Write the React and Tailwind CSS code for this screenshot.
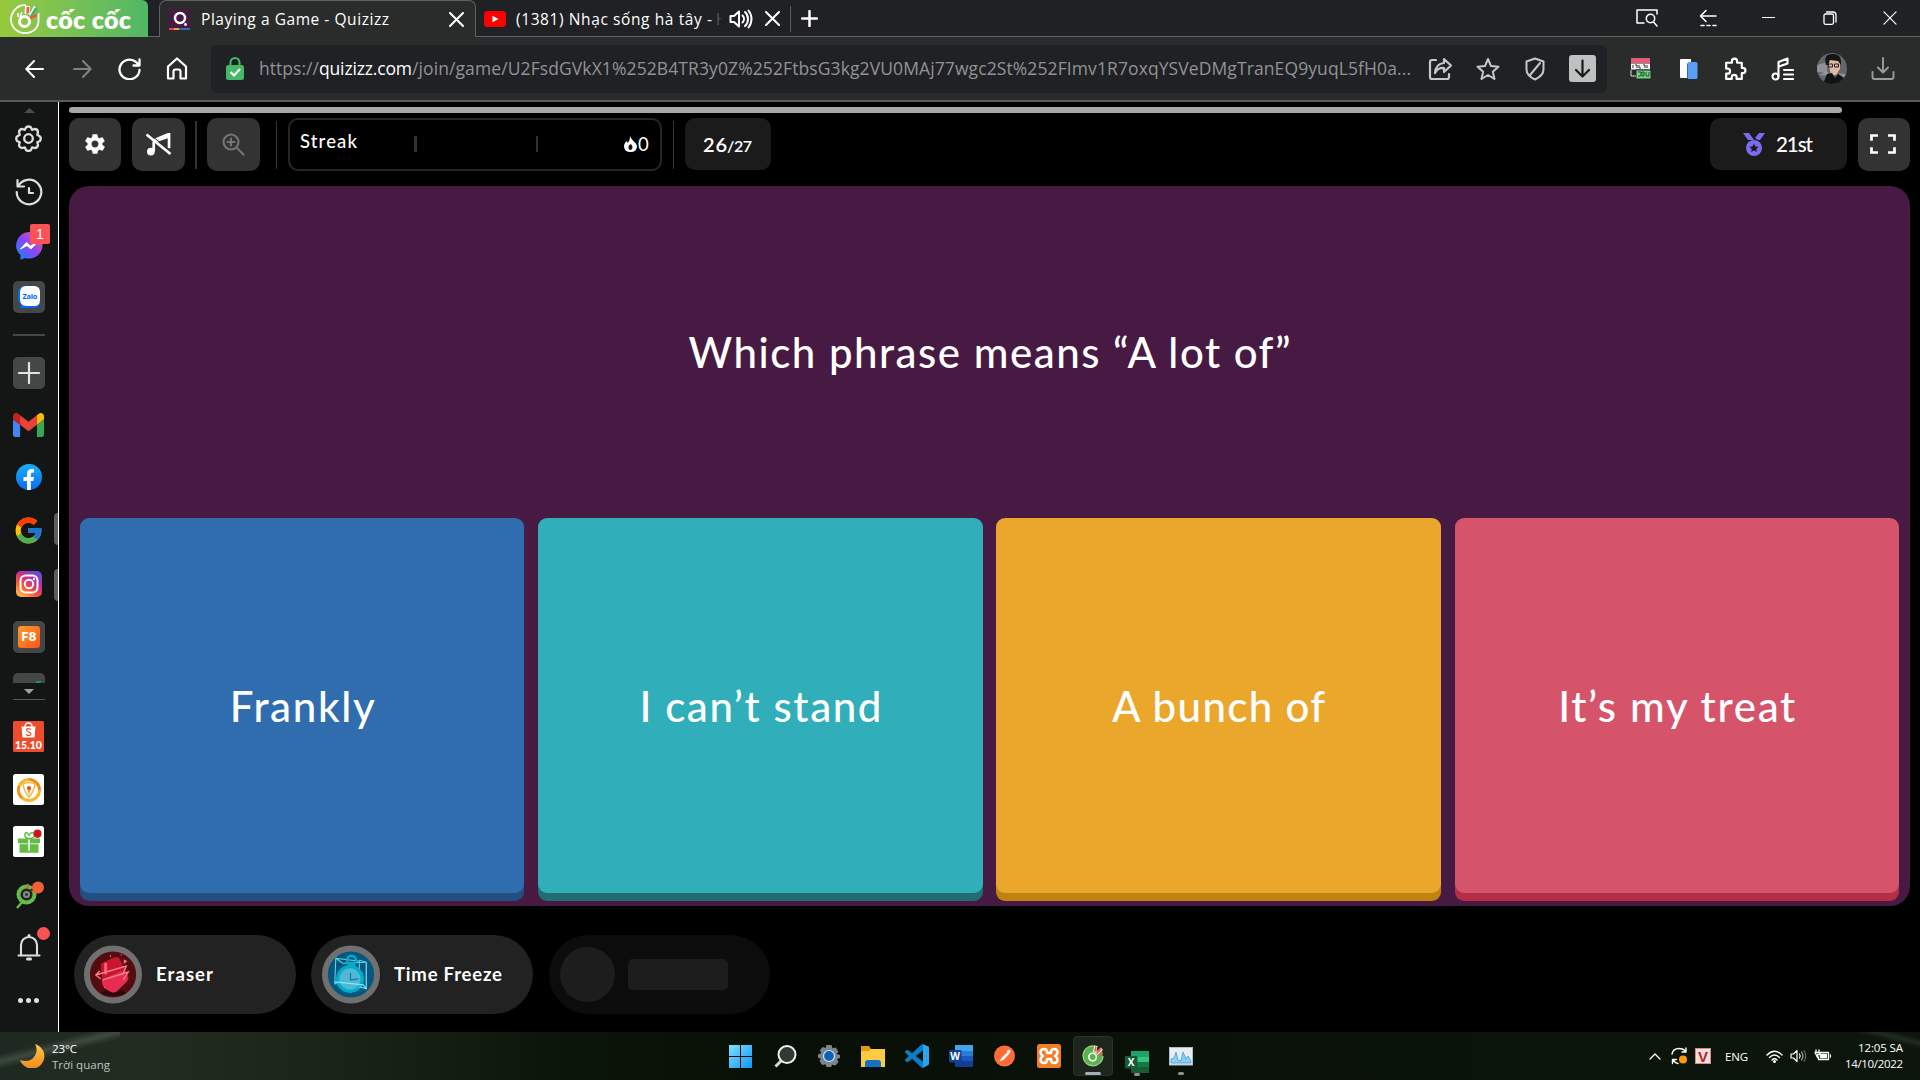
import React, { useLayoutEffect, useRef } from "react";
import { FcGoogle } from "react-icons/fc";
import { IoMdSettings } from "react-icons/io";

const UI = "font-['Open_Sans','Noto_Sans',sans-serif]";
const ROUND = "font-['Lato','Open_Sans',sans-serif]";

/* Text set to an exact width by adjusting its tracking. */
function Fit({ w, className = "", children }) {
  const ref = useRef(null);
  useLayoutEffect(() => {
    const el = ref.current;
    el.style.letterSpacing = "0px";
    const natural = el.getBoundingClientRect().width;
    const n = Math.max(1, el.textContent.length - 1);
    el.style.letterSpacing = (w - natural) / n + "px";
  }, [w]);
  return (
    <span className={"block shrink-0 " + className} style={{ width: w }}>
      <span ref={ref} className="inline-block whitespace-nowrap">{children}</span>
    </span>
  );
}

function Line({ w = 24, h = w, vb = "0 0 24 24", sw = 2, className = "", children }) {
  return (
    <svg width={w} height={h} viewBox={vb} fill="none" stroke="currentColor" strokeWidth={sw}
      strokeLinecap="round" strokeLinejoin="round" className={"block shrink-0 " + className}>
      {children}
    </svg>
  );
}

const Cross = ({ s = 15, sw = 2, className = "" }) => (
  <Line w={s} vb="0 0 15 15" sw={sw} className={className}><path d="M1 1l13 13M14 1L1 14" /></Line>
);

function CocMark({ s, leaf, ring }) {
  return (
    <svg width={s} height={s} viewBox="0 0 30 30" fill="none" className="block shrink-0">
      <path d="M16 2A13 13 0 1 0 28 15L27 5 20 9Z" fill={leaf} />
      <path d="M17 1.500A13.500 13.500 0 1 0 28.500 15" stroke={ring} strokeWidth="1.800" />
      <path d="M19 1l-2 9" stroke="#fff" strokeWidth="4.500" /><path d="M27 5l-7 7" stroke="#fff" strokeWidth="4.500" />
      <path d="M19 2l-1.500 7M26 5l-6 6.500M28.500 11l-6 2.500" stroke="#f05a3c" strokeWidth="2.400" />
      <circle cx="14.500" cy="16.500" r="5.200" stroke="#fff" strokeWidth="2.200" />
    </svg>
  );
}

function TabStrip() {
  return (
    <div className="flex h-[37px] bg-[#202124] text-white">
      <div className="flex h-[37px] w-[148px] shrink-0 items-center rounded-tr-[6px] bg-linear-to-r from-[#98c93c] to-[#4fb765] pl-[10px]">
        <svg width="30" height="30" viewBox="0 0 30 30" fill="none" className="block">
          <path d="M16 1.200C7 .500 1 8 1 15.500S7 29 15 29s13.500-5 13.500-12V9" stroke="#fff" strokeWidth="1.800" />
          <path d="M23 3l4-1.500 1.500 8-8 4-3-2z" fill="#6cbf5c" />
          <path d="M17.500 2l-.500 8" stroke="#fff" strokeWidth="5" /><path d="M18 3l-.500 6.500M27 11l-7 3" stroke="#f05a3c" strokeWidth="2.600" />
          <path d="M25 2.500l-5 9" stroke="#fff" strokeWidth="2.500" /><path d="M26 4l-5 8" stroke="#3fae5e" strokeWidth="2" />
          <path d="M12 8l-2 5M8 9v4" stroke="#fff" strokeWidth="1.600" />
          <circle cx="14.500" cy="17.500" r="5" stroke="#fff" strokeWidth="3" />
        </svg>
        <Fit w={85} className="ml-[6px] font-['Lato','Open_Sans',sans-serif] text-[25px] leading-[30px] font-extrabold">cốc cốc</Fit>
      </div>
      <div className="h-[37px] w-[11px] border-b border-[#5f6163]" />
      <div className="flex h-[37px] w-[317px] shrink-0 items-center rounded-t-[7px] border border-b-0 border-[#5f6163] bg-[#2a2c2b] pl-[9px]">
        <svg width="21" height="21" viewBox="0 0 21 21" fill="none" className="block">
          <rect width="21" height="19" fill="#461a42" /><path d="M0 20h5" stroke="#e0405f" strokeWidth="2" /><path d="M5 20h5" stroke="#f0a030" strokeWidth="2" /><path d="M10 20h11" stroke="#2f6dae" strokeWidth="2" />
          <circle cx="11" cy="9" r="5" stroke="#fff" strokeWidth="2.500" /><circle cx="16.500" cy="15.500" r="1.400" fill="#fff" />
        </svg>
        <Fit w={188} className={UI + " ml-[11px] text-[15.500px] leading-[20px]"}>Playing a Game - Quizizz</Fit>
        <Cross className="ml-[60px]" />
      </div>
      <div className="flex h-[37px] flex-1 items-center border-b border-[#5f6163] pt-px pl-[8px]">
        <svg width="22" height="16" viewBox="0 0 22 16" className="block"><rect width="22" height="16" rx="3.500" fill="#f00" /><path d="M8.500 4.700l6 3.300-6 3.300z" fill="#fff" /></svg>
        <div className="ml-[10px] flex w-[212px]">
          <Fit w={196} className={UI + " text-[15.500px] leading-[24px]"}>(1381) Nhạc sống hà tây -</Fit>
          <span className={UI + " ml-[4px] bg-linear-to-r from-[#77797c] to-[#202124] to-60% bg-clip-text text-[15.500px] leading-[24px] text-transparent"}>H</span>
        </div>
        <Line w={24} h={20} vb="0 0 24 20" className="ml-px"><path d="M1.500 7v6h3.500l5 4.500v-15L5 7zM13.500 6.500c2 2 2 5 0 7M16 3c4 3.500 4 10.500 0 14M19.500 1.500c4 5 4 12 0 17" /></Line>
        <Cross className="ml-[12px]" />
        <div className="ml-[10px] h-[26px] w-px bg-[#5a5c5e]" />
        <Line w={17} vb="0 0 17 17" sw={2.5} className="ml-[10px]"><path d="M8.500 1v15M1 8.500h15" /></Line>
        <div className="mr-[23px] ml-auto flex items-center pb-[2px]">
          <Line w={22} h={18} vb="0 0 22 18" sw={1.5}><path d="M8 14H1V1h20v4" /><circle cx="14.500" cy="9.500" r="4.200" /><path d="M17.500 13l3.500 4" /></Line>
          <Line w={18} h={18} vb="0 0 18 18" sw={1.6} className="ml-[41px]"><path d="M17 7H1.500M7 1.500L1.500 7 7 12.500" /><path d="M2 16.500h3M8 16.500h3M14 16.500h3" /></Line>
          <div className="ml-[45px] h-[1.500px] w-[13px] bg-white" />
          <Line w={14} h={14} vb="0 0 14 14" sw={1.3} className="ml-[48px]"><rect x="1" y="3" width="9.500" height="10.300" rx="1.500" /><path d="M3.500 1h6.500q3 0 3 3v7" /></Line>
          <Cross s={14} sw={1.3} className="ml-[46px]" />
        </div>
      </div>
    </div>
  );
}

function Toolbar() {
  return (
    <div className="flex h-[65px] items-center border-b-2 border-[#5a5c5b] bg-[#2a2c2b] text-white">
      <Line w={19} h={18} vb="0 0 19 18" className="ml-[25px]"><path d="M18 9H1.500M9 1L1.300 9 9 17" /></Line>
      <Line w={19} h={18} vb="0 0 19 18" className="ml-[29px] text-[#808281]"><path d="M1 9h16.500M10 1l7.700 8L10 17" /></Line>
      <Line w={23} h={22} vb="0 0 23 22" sw={2.3} className="ml-[26px]"><path d="M21.500 12A10 9.800 0 1 1 18 4l3 3M21.500 1.500V7.500H15.500" /></Line>
      <Line w={22} h={23} vb="0 0 22 23" sw={2.2} className="ml-[25px]"><path d="M2 9.500L11 1.500l9 8V21.500H14.500V14.500q0-2-2-2h-3q-2 0-2 2v7H2z" /></Line>
      <div className="ml-[23px] flex h-[48px] w-[1396px] shrink-0 items-center rounded-[6px] bg-[#202124] pl-[15px]">
        <svg width="18" height="23" viewBox="0 0 18 23" fill="none" className="block"><path d="M4.500 9V5.500a4.500 4.500 0 0 1 9 0V9" stroke="#46b968" strokeWidth="2" /><rect y="8" width="18" height="15" rx="2.500" fill="#46b968" /><path d="M4.500 15l3.500 3.500 6-6.500" stroke="#fff" strokeWidth="2.200" /></svg>
        <div className={UI + " -mt-px ml-[15px] flex text-[17.500px] leading-[26px] text-[#919395]"}>
          <Fit w={60}>https://</Fit>
          <Fit w={93} className="text-white">quizizz.com</Fit>
          <Fit w={999}>/join/game/U2FsdGVkX1%252B4TR3y0Z%252FtbsG3kg2VU0MAj77wgc2St%252FImv1R7oxqYSVeDMgTranEQ9yuqL5fH0a...</Fit>
        </div>
        <div className="ml-[17px] flex items-center text-[#c6c7c8]">
          <Line w={25} h={24} vb="0 0 25 24" sw={2.2}><path d="M8 3H4Q2 3 2 5v15q0 2 2 2h15q2 0 2-2v-3" /><path d="M16 2l7 6.500-7 6.500v-4c-4-.300-7 1.200-9 5 .500-6 4-9.500 9-10z" /></Line>
          <Line w={24} h={24} className="ml-[23px]"><path d="M12 2l3 7 7.500.700-5.700 5 1.700 7.300L12 18l-6.500 4 1.700-7.300-5.700-5L9 9z" /></Line>
          <Line w={20} h={24} vb="0 0 20 24" className="ml-[25px]"><path d="M10 1.500l8.500 3v8q0 6-8.500 10-8.500-4-8.500-10v-8zM15 6L5.500 17.500" /></Line>
          <div className="ml-[24px] flex h-[27px] w-[27px] items-center justify-center rounded-[3px] bg-[#bfc0c0] text-[#17181a]"><Line w={17} h={19} vb="0 0 17 19" sw={2.2}><path d="M8.500 1.500v16M2 11l6.500 6.500L15 11" /></Line></div>
        </div>
      </div>
      <svg width="22" height="22" viewBox="0 0 22 22" className="ml-[23px] block shrink-0"><rect x="1" width="19" height="5" fill="#e85a78" /><path d="M1 5.500h19v6H1z" fill="#f4f4f4" /><path d="M3 7v3M5 7h2v3M9 7v3h2M13 7h2v3M17 7v3" stroke="#333" fill="none" /><rect x="6" y="12" width="15" height="9" fill="#7dd18b" stroke="#222" /><path d="M8 14h3v4H8M12 14h2v4h-2zM16 14v4h3v-4" stroke="#155c28" fill="none" /><path d="M1 12v6h5" stroke="#ddd" fill="none" /></svg>
      <svg width="18" height="22" viewBox="0 0 18 22" className="ml-[28px] block shrink-0"><path d="M0 2Q0 1 1 1h10v4H9Q7 5 7 7v13H1q-1 0-1-1z" fill="#fff" /><rect x="7.500" y="4" width="10" height="17" rx="1.500" fill="#5b9ff5" /></svg>
      <Line w={25} h={26} vb="0 0 24 24" sw={2.1} className="ml-[24px]"><path d="M9.500 5.500a2.500 2.500 0 0 1 5 0V7H19v5h1a2.500 2.500 0 0 1 0 5h-1v5.500h-5v-1.500a2.300 2.300 0 0 0-4.600 0v1.500H4v-5h1.300a2.400 2.400 0 0 0 0-4.900H4V7h5.500z" transform="translate(0 -1)" /></Line>
      <Line w={23} h={24} vb="0 0 23 24" sw={2.1} className="ml-[24px]"><circle cx="4.500" cy="19.500" r="3" /><path d="M7.500 19V5l9-3.500v5L8 9.500M13 13h9M13 17.500h9M13 22h9" /></Line>
      <svg width="30" height="31" viewBox="0 0 30 31" className="ml-[23px] block shrink-0"><defs><clipPath id="av"><ellipse cx="15" cy="15.500" rx="15" ry="15.500" /></clipPath></defs><g clipPath="url(#av)"><path d="M0 0h30v31H0z" fill="#62676c" /><path d="M0 12l10-3v11L0 19z" fill="#8c9196" /><path d="M11 9Q10 4 16 4t7 6v6l-4 6h-5z" fill="#e0b9a4" /><path d="M9 12Q6 1 15 1q10-1 9 11l-3-4-8-1-2 5z" fill="#151515" /><path d="M11.500 11h4v3h-4zM17.500 11h4v3h-4z" fill="none" stroke="#222" /><path d="M2 22l8-4 4 5M20 20l9 1v5" fill="#a9adb1" opacity=".6" /><path d="M6 31l4-10 5-1 3 5 3-4 6 4 1 6z" fill="#121315" /></g></svg>
      <Line w={24} h={24} vb="0 0 24 24" sw={1.900} className="ml-[24px] text-[#9b9d9c]"><path d="M12 1v14M7 10.500l5 5 5-5M1.500 15v5q0 2 2 2h17q2 0 2-2v-5" /></Line>
    </div>
  );
}

const Grey = ({ className = "", children }) => (
  <div className={"flex h-[32px] w-[32px] shrink-0 items-center justify-center rounded-[5px] bg-[#444746] " + className}>{children}</div>
);

function Edge({ className = "", children }) {
  return (
    <div className={"relative flex w-[58px] shrink-0 justify-center pr-px " + className}>
      {children}
      <div className="absolute -top-[2px] right-0 h-[32px] w-[4px] rounded-l-[4px] bg-[#5b5d5c]" />
    </div>
  );
}

function Sidebar() {
  return (
    <div className="flex w-[59px] shrink-0 flex-col items-center border-r border-white bg-[#131615] text-[#dedede]">
      <svg width="11" height="5" viewBox="0 0 11 5" className="mt-[6px] block shrink-0"><path d="M0 5L5.500 0 11 5z" fill="#4b4e4d" /></svg>
      <Line w={27} vb="0 0 27 27" sw={2.3} className="mt-[12px] mr-px">
        <path d="M11 2.500Q13.500.500 16 2.500L17 4.800 19.500 4Q22.700 4 23 7L22.300 9.800 25 11.500Q26.500 13.500 25 16L22.300 17.300 23 20Q22.500 23 19.500 23L17 22.300 16 25Q13.500 26.800 11 25L9.800 22.300 7.500 23Q4.300 23 4 20L4.800 17.300 2 16Q.500 13.500 2 11.500L4.800 9.800 4 7Q4.500 4 7.500 4L9.800 4.800z" /><circle cx="13.500" cy="13.500" r="4.300" />
      </Line>
      <Line w={28} h={28} vb="0 0 28 28" sw={2.2} className="mt-[26px]"><path d="M3 8.500A12.300 12.300 0 1 1 1.700 14M2.500 2v6.500H9" /><path d="M14 10v5h4" /></Line>
      <div className="relative mt-[26px] shrink-0">
        <svg width="28" height="28" viewBox="0 0 28 28" className="block"><defs><linearGradient id="ms" x1="0" y1="1" x2="1" y2="0"><stop stopColor="#0a8cff" /><stop offset=".5" stopColor="#8a45f8" /><stop offset="1" stopColor="#ff6070" /></linearGradient></defs><path d="M14 0a13.500 13.300 0 1 1-4 26l-4.500 2v-5A13.500 13.300 0 0 1 14 0z" fill="url(#ms)" /><path d="M5.500 17l6-6.500 4 3.500 6.500-3.500-6 6.500-4-3.500z" fill="#fff" stroke="#fff" /></svg>
        <div className="absolute -top-[8px] left-[15px] h-[20px] w-[20px] rounded-[2px] bg-[#fb5257] text-center font-['Liberation_Sans',sans-serif] text-[14px] leading-[20px] text-white">1</div>
      </div>
      <Grey className="mt-[21px]"><svg width="22" height="22" viewBox="0 0 22 22" className="block"><path d="M7 0h9q6 0 6 6v10q0 6-6 6H2l1-3q-3-3-3-7V7q0-7 7-7z" fill="#0068ff" /><path d="M8 0h8q6 0 6 6v8q0 6-6 6H8q-6 0-6-7V7q0-7 6-7z" fill="#fff" /><text x="12" y="13" fontSize="7.500" fontWeight="bold" fill="#0068ff" textAnchor="middle" fontFamily="Open Sans" textLength="15">Zalo</text></svg></Grey>
      <div className="mt-[21px] h-[2px] w-[32px] shrink-0 bg-[#444746]" />
      <Grey className="mt-[21px]"><Line w={22} vb="0 0 22 22" sw={2.2} className="text-[#e2e2e2]"><path d="M11 1v20M1 11h20" /></Line></Grey>
      <svg width="31" height="24" viewBox="52 42 88 66" preserveAspectRatio="none" className="mt-[24px] mr-px block shrink-0"><path fill="#4285f4" d="M58 108h14V74L52 59v43c0 3.320 2.690 6 6 6" /><path fill="#34a853" d="M120 108h14c3.320 0 6-2.690 6-6V59l-20 15" /><path fill="#fbbc04" d="M120 48v26l20-15v-8c0-7.420-8.470-11.650-14.400-7.200" /><path fill="#ea4335" d="M72 74V48l24 18 24-18v26L96 92" /><path fill="#c5221f" d="M52 51v8l20 15V48l-5.600-4.200c-5.940-4.450-14.400-.220-14.400 7.200" /></svg>
      <svg width="26" height="27" viewBox="0 0 26 27" className="mt-[27px] mr-px block shrink-0"><defs><linearGradient id="fb" x1="0" y1="0" x2="0" y2="1"><stop stopColor="#19affc" /><stop offset="1" stopColor="#0a6cf0" /></linearGradient></defs><circle cx="13" cy="13" r="13" fill="url(#fb)" /><path d="M11 26v-9H7.500v-4H11v-3c0-4 2.500-5.500 7-4.800v3.300c-2.500-.300-3.200.500-3.200 2V13H18l-.700 4h-2.500v9z" fill="#fff" /></svg>
      <Edge className="mt-[24px]"><FcGoogle size={31} className="block" /></Edge>
      <Edge className="mt-[25px]"><svg width="26" height="26" viewBox="0 0 26 26" fill="none" className="block"><defs><linearGradient id="ig" x1=".1" y1="1" x2=".8" y2="0"><stop stopColor="#ffc850" /><stop offset=".35" stopColor="#fa5a32" /><stop offset=".65" stopColor="#c82e92" /><stop offset="1" stopColor="#5a50d8" /></linearGradient></defs><rect width="26" height="26" rx="5" fill="url(#ig)" /><rect x="4.500" y="4.500" width="17" height="17" rx="5" stroke="#fff" strokeWidth="2" /><circle cx="13" cy="13" r="4.200" stroke="#fff" strokeWidth="2" /><circle cx="18" cy="8" r="1.200" fill="#fff" /></svg></Edge>
      <Grey className="mt-[24px]"><div className="flex h-[22px] w-[22px] items-center justify-center rounded-[3px] bg-linear-to-br from-[#ff9a26] to-[#f9501c] font-['Inter',sans-serif] text-[12px] leading-none font-extrabold text-white">F8</div></Grey>
      <div className="mt-[20px] flex h-[10px] w-[32px] shrink-0 items-end justify-end rounded-t-[5px] bg-[#444746] pr-[4px]"><div className="h-[2px] w-[5px] bg-[#149a62]" /></div>
      <svg width="10" height="5" viewBox="0 0 10 5" className="mt-[6px] block shrink-0"><path d="M0 0h10L5 5z" fill="#a0a2a1" /></svg>
      <div className="mt-[5px] h-px w-[32px] shrink-0 bg-[#555857]" />
      <svg width="31" height="31" viewBox="0 0 31 31" className="mt-[21px] mr-px block shrink-0 overflow-visible"><rect width="31" height="31" rx="1.500" fill="#ee4d2d" /><path d="M8.500 5.500h14l-1 11h-12z" fill="#fff" /><path d="M12 6q0-4 3.500-4T19 6" stroke="#fff" fill="none" strokeWidth="1.400" /><path d="M18 8.500q-4.500-2-4.500.500c0 2.500 4.500 1.500 4.500 4 0 2-3 2-5 .500" stroke="#ee4d2d" strokeWidth="1.100" fill="none" /><text x="15.500" y="27.500" fontSize="11.500" fontWeight="900" textAnchor="middle" fill="#fff" fontFamily="Lato" textLength="27" lengthAdjust="spacingAndGlyphs">15.10</text></svg>
      <svg width="31" height="31" viewBox="0 0 31 31" fill="none" className="mt-[22px] mr-px block shrink-0"><rect width="31" height="31" rx="2.500" fill="#fff" /><circle cx="16" cy="16" r="10.500" stroke="#f9b52c" strokeWidth="3" /><path d="M16 5.500A10.500 10.500 0 0 1 26.500 16M9 24A10.500 10.500 0 0 1 6 12" stroke="#f28a1c" strokeWidth="2.500" /><path d="M10 10q6-3 12 0-1 8-6 13-5-5-6-13z" stroke="#f7b53c" strokeWidth="1.500" /><path d="M14 14h4l-2 8z" fill="#f7a63c" /><circle cx="16" cy="14" r="2" fill="#d8552c" /></svg>
      <svg width="31" height="31" viewBox="0 0 31 30" preserveAspectRatio="none" className="mt-[21px] mr-px block shrink-0"><rect width="31" height="30" rx="2.500" fill="#fff" /><path d="M5 12h22v5H5zM6.500 17h19v9h-19z" fill="#63bd45" /><path d="M5 17.200h22" stroke="#fff" strokeWidth=".8" /><path d="M16 12q-5 0-4-4t4 1q3-5 5-1t-5 4" stroke="#63bd45" fill="none" strokeWidth="1.500" /><path d="M16 13v11" stroke="#fff" strokeWidth="1.500" /><circle cx="24.500" cy="7.500" r="4" fill="#d0141f" /></svg>
      <svg width="29" height="29" viewBox="0 0 29 29" fill="none" className="mt-[24px] block shrink-0"><path d="M8 20l-6 7" stroke="#6cb83f" strokeWidth="2.500" /><circle cx="11.500" cy="13.500" r="10" fill="#62bd4a" /><path d="M15 9l6-5 2 8z" fill="#131615" /><path d="M12 8l1-5M17 11l4-2" stroke="#f05a3c" strokeWidth="2" /><circle cx="11.500" cy="13.500" r="4.800" fill="#888" stroke="#222" strokeWidth="2.500" /><circle cx="11.500" cy="13.500" r="1.500" fill="#333" /><circle cx="23" cy="6.500" r="6" fill="#f26135" /></svg>
      <div className="relative mt-[24px] mr-px shrink-0">
        <Line w={24} h={27} vb="0 0 24 27" sw={2.1}><path d="M4 21V11a8 8 0 0 1 16 0v10M1.500 21.500h21" /><path d="M12 1.500v1M10.500 25h3" strokeWidth="3" /></Line>
        <div className="absolute -top-[7px] left-[20px] h-[13px] w-[13px] rounded-full bg-[#fb5257]" />
      </div>
      <div className="mt-[37px] mr-px flex gap-[3px]"><div className="h-[5px] w-[5px] rounded-full bg-[#dedede]" /><div className="h-[5px] w-[5px] rounded-full bg-[#dedede]" /><div className="h-[5px] w-[5px] rounded-full bg-[#dedede]" /></div>
    </div>
  );
}

function GameBar() {
  return (
    <div className="mt-[5px] flex h-[53px] items-center text-white">
      <div className="flex h-[53px] w-[52px] items-center justify-center rounded-[10px] bg-[#333] pb-px"><IoMdSettings size={24} /></div>
      <div className="ml-[11px] flex h-[53px] w-[53px] items-center justify-center rounded-[10px] bg-[#333] pr-px pb-px">
        <svg width="27" height="23" viewBox="0 0 28 24" fill="none" className="block"><path d="M8 8l17-7v15M9 9v10" stroke="#fff" strokeWidth="2.800" /><path d="M9 9L25 2v3L13 9z" fill="#fff" /><circle cx="6" cy="19.500" r="4" fill="#fff" /><path d="M1.500 1.500l25 20.500" stroke="#fff" strokeWidth="2.800" /><path d="M3.500 0l24 19.500" stroke="#333" strokeWidth="1" /></svg>
      </div>
      <div className="ml-[10px] h-[48px] w-[2px] bg-[#333]" />
      <div className="ml-[10px] flex h-[53px] w-[53px] items-center justify-center rounded-[10px] bg-[#333] pb-px text-[#747474]">
        <Line w={23} vb="0 0 23 23" sw={2.2}><circle cx="9" cy="9" r="7.500" /><path d="M15 15l6.500 6.500M9 5.500v7M5.500 9h7" /></Line>
      </div>
      <div className="ml-[16px] h-[48px] w-px bg-[#333]" />
      <div className="ml-[11px] flex h-[53px] w-[374px] items-center rounded-[10px] border-2 border-[#262626] pb-px pl-[10px]">
        <Fit w={57} className={ROUND + " -mt-[6px] text-[18.500px] leading-[22px] font-medium"}>Streak</Fit>
        <div className="ml-[57px] h-[16px] w-[3px] bg-[#333]" />
        <div className="ml-[119px] h-[16px] w-[2px] bg-[#333]" />
        <svg width="13" height="16" viewBox="0 0 13 16" className="ml-[86px] block"><path d="M6 0q1 3 4 5.500t3 5Q12.500 16 6.500 16T0 10.500Q0 7 3 5l.500 2Q6 5 6 0z" fill="#fff" /><path d="M7 8q2 2.500 1.500 4T6.500 14 4.500 12 7 8z" fill="#111" /></svg>
        <span className={ROUND + " ml-px -mt-px text-[18.500px] leading-[22px]"}>0</span>
      </div>
      <div className="ml-[11px] h-[48px] w-px bg-[#333]" />
      <div className={ROUND + " ml-[11px] flex h-[52px] w-[86px] items-baseline self-start rounded-[10px] bg-[#1b1b1b] pt-[12px] pl-[18px] font-semibold"}>
        <Fit w={24} className="text-[20px] leading-[28px]">26</Fit><Fit w={25} className="text-[16px] leading-[28px]">/27</Fit>
      </div>
      <div className="ml-auto flex h-[52px] w-[137px] items-center self-start rounded-[10px] bg-[#1b1b1b] pl-[33px]">
        <svg width="22" height="23" viewBox="0 0 22 23" className="block"><path d="M0 0h6l5 7H5zM22 0h-6l-4 5 3 2h2z" fill="#7a6cf0" /><circle cx="11" cy="15" r="8" fill="#7a6cf0" /><path d="M11 10.500l1.400 3 3.200.300-2.400 2.100.700 3.200L11 17.400l-2.900 1.700.700-3.200-2.400-2.100 3.200-.300z" fill="#1b1b1b" /></svg>
        <Fit w={37} className={ROUND + " ml-[11px] text-[20.500px] leading-[26px] font-medium"}>21st</Fit>
      </div>
      <div className="ml-[11px] flex h-[53px] w-[52px] items-center justify-center rounded-[10px] bg-[#333] pr-[2px] pb-px">
        <svg width="26" height="20" viewBox="0 0 26 21" preserveAspectRatio="none" fill="none" stroke="#fff" strokeWidth="2.700" className="block"><path d="M8 1.500H1.500V7M18 1.500h6.500V7M8 19.500H1.500V14M18 19.500h6.500V14" /></svg>
      </div>
    </div>
  );
}

const ANSWERS = [
  { text: "Frankly", w: 145, box: "bg-[#2f6dae] shadow-[0_8px_0_#224f7f]" },
  { text: "I can’t stand", w: 242, box: "bg-[#30aeba] shadow-[0_8px_0_#226c72]" },
  { text: "A bunch of", w: 213, box: "bg-[#eba72c] shadow-[0_8px_0_#c1830f]" },
  { text: "It’s my treat", w: 237, box: "bg-[#d5546a] shadow-[0_8px_0_#b52e46]" },
];

function PowerUps() {
  return (
    <div className={ROUND + " mt-[29px] ml-[5px] flex h-[79px] gap-[16px] text-[18.500px] font-bold text-white"}>
      <div className="flex w-[222px] items-center rounded-full bg-[#222] pl-[10px]">
        <svg width="58" height="59" viewBox="0 0 59 59" fill="none" className="block"><circle cx="29.500" cy="29.500" r="26.500" fill="#540c10" stroke="#707070" strokeWidth="6" /><ellipse cx="30" cy="48" rx="12" ry="3" fill="#2c0608" /><path d="M17 20q0-2 3-3l11-5q3-1 5 1l9 18q1 3-1 5l-10 10q-3 3-7 1l-5-3q-2-1-3-4z" fill="#c91630" /><path d="M18 35l20-9 7 7-1 3-10 10q-3 3-7 1l-5-3q-2-1-3-4z" fill="#e62c52" /><path d="M22 19v9" stroke="#ff6473" strokeWidth="3" strokeLinecap="round" /><path d="M16 26l-4 4 5 4M12 30l31-9-4 9M19 35l26-8-5 8" stroke="#ff7f8e" strokeWidth="1.400" /><path d="M27 10v1.500M38 9v1M41 15l2 1-2 1.500zM21 42v1" stroke="#ff7384" strokeWidth="1.200" /></svg>
        <Fit w={57} className="ml-[14px]">Eraser</Fit>
      </div>
      <div className="-ml-px flex w-[222px] items-center rounded-full bg-[#222] pl-[11px]">
        <svg width="58" height="59" viewBox="0 0 59 59" fill="none" className="block"><circle cx="29.500" cy="29.500" r="26.500" fill="#04577f" stroke="#707070" strokeWidth="6" /><path d="M14 13l24 3v20l-25 3zM14 13l7 5 24-1-7-2" stroke="#5fd2ea" strokeWidth="1.100" /><circle cx="28.500" cy="34" r="12.500" fill="#50b8d5" stroke="#00aecb" strokeWidth="3.500" /><circle cx="30" cy="15" r="4.500" stroke="#00aecb" strokeWidth="2.500" /><path d="M26 19h8v3h-8z" fill="#00aecb" /><path d="M45 17v27l-7-2M13 37l29 3 3 4" stroke="#7ee8f8" strokeWidth="1.200" /><path d="M29 28v7l8-1" stroke="#16809f" strokeWidth="1.400" /></svg>
        <Fit w={108} className="ml-[14px]">Time Freeze</Fit>
      </div>
      <div className="flex w-[221px] items-center rounded-full bg-[#0c0c0c] pl-[11px]">
        <div className="h-[55px] w-[55px] rounded-full bg-[#1d1d1d]" />
        <div className="ml-[13px] h-[31px] w-[100px] rounded-[5px] bg-[#1d1d1d]" />
      </div>
    </div>
  );
}

function Game() {
  return (
    <div className="flex flex-1 flex-col bg-black pr-[10px] pl-[10px]">
      <div className="mt-[5px] h-[6px] w-[1773px] rounded-full bg-[#a8a8a8]" />
      <GameBar />
      <div className={ROUND + " mt-[15px] flex h-[720px] flex-col rounded-[20px] bg-[#461a42] px-[11px] font-medium text-white"}>
        <div className="flex h-[332px] items-center justify-center pb-px">
          <Fit w={602} className="text-[42px] leading-[50px]">Which phrase means “A lot of”</Fit>
        </div>
        <div className="grid grid-cols-4 gap-[13.700px]">
          {ANSWERS.map((a) => (
            <div key={a.text} className={"flex h-[375px] items-center justify-center rounded-[9px] " + a.box}>
              <Fit w={a.w} className="text-[42px] leading-[50px]">{a.text}</Fit>
            </div>
          ))}
        </div>
      </div>
      <PowerUps />
    </div>
  );
}

function Office({ letter, top, mid, low, tile }) {
  return (
    <svg width="24" height="22" viewBox="0 0 24 22" className="block shrink-0"><path d="M6 0h18v6H6z" fill={top} /><path d="M6 6h18v5H6z" fill={mid} /><path d="M6 11h18v5H6z" fill={low} /><path d="M6 16h18v6H6z" fill={tile} /><rect y="5" width="12.500" height="12.500" rx="1" fill={tile} /><text x="6.200" y="14.800" fontSize="10" fontWeight="bold" fill="#fff" textAnchor="middle" fontFamily="Open Sans">{letter}</text></svg>
  );
}

function Taskbar() {
  return (
    <div className={UI + " relative flex h-[48px] bg-[linear-gradient(90deg,#1e2921_0px,#222c20_140px,#1a2517_330px,#0c1509_560px,#080f06_800px,#0b140a_1500px,#0c160c_1920px)] text-white"}>
      <div className="absolute top-0 left-0 h-full w-[120px] bg-[linear-gradient(166deg,transparent_28%,rgba(150,170,150,0.25)_38%,transparent_48%)]" />
      <div className="absolute top-0 right-0 h-full w-[90px] bg-[linear-gradient(194deg,transparent_8%,rgba(150,170,150,0.15)_16%,transparent_24%)]" />
      <div className="relative flex w-[729px] shrink-0 items-center pl-[20px]">
        <svg width="25" height="24" viewBox="0 0 25 24" className="block"><defs><linearGradient id="mn" x1="0" y1="0" x2="0" y2="1"><stop stopColor="#ffc94a" /><stop offset="1" stopColor="#f28a1c" /></linearGradient></defs><path d="M15 0a12.500 12.500 0 1 1-15 16c6 2 11 1 14-3s3.500-8 1-13z" fill="url(#mn)" /></svg>
        <div className="mt-px ml-[7px] text-[11.500px] leading-[16px]"><Fit w={25}>23°C</Fit><Fit w={58} className="text-[#bfc4c0]">Trời quang</Fit></div>
      </div>
      <div className="flex items-center">
        <svg width="23" height="23" viewBox="0 0 23 23" className="block"><defs><linearGradient id="wn" x1="0" y1="0" x2="1" y2="1"><stop stopColor="#7fe0ff" /><stop offset="1" stopColor="#0f96f5" /></linearGradient></defs><path d="M0 0h11v11H0zM12 0h11v11H12zM0 12h11v11H0zM12 12h11v11H12z" fill="url(#wn)" /></svg>
        <svg width="23" height="23" viewBox="0 0 23 23" fill="none" className="ml-[22px] block"><circle cx="13" cy="9.500" r="8.500" fill="#343835" stroke="#f0f0f0" strokeWidth="2" /><path d="M7 16l-5.500 5.500" stroke="#d8d8d8" strokeWidth="3" /></svg>
        <svg width="24" height="24" viewBox="0 0 24 24" fill="none" className="ml-[20px] block"><path d="M9.500 1h5l1 3.200 3.300-.700 2.600 4.300L19.500 10l3.500 1v3l-3 1 1.500 3-3 3.500-3.500-.800L14 23h-4.500l-1-2.800-3.300.800L2.500 17 4 15l-3-1.500v-3L4.500 9 2.800 6.500 5.500 3l3 1z" fill="#7c858f" /><circle cx="12" cy="12" r="5.500" fill="#0c62b8" stroke="#dce4ec" strokeWidth="1.200" /></svg>
        <svg width="24" height="22" viewBox="0 0 24 22" className="ml-[20px] block"><path d="M0 1h8l2 3h7v4H0z" fill="#e19a12" /><path d="M0 6h8l2-2h14v18H0z" fill="#fccb42" /><path d="M4 22v-4q0-3 3-3h10q3 0 3 3v4z" fill="#1472c4" /></svg>
        <svg width="24" height="24" viewBox="0 0 24 24" className="ml-[20px] block"><path d="M23.150 2.587L18.210.210a1.494 1.494 0 0 0-1.705.290l-9.460 8.630-4.120-3.128a.999.999 0 0 0-1.276.057L.327 7.261A1 1 0 0 0 .326 8.740L3.899 12 .326 15.260a1 1 0 0 0 .001 1.479L1.650 17.940a.999.999 0 0 0 1.276.057l4.120-3.128 9.460 8.630a1.492 1.492 0 0 0 1.704.290l4.942-2.377A1.500 1.500 0 0 0 24 20.060V3.939a1.500 1.500 0 0 0-.850-1.352zm-5.146 14.861L10.826 12l7.178-5.448v10.896z" fill="#0a7dc8" /><path d="M18 .500l5.150 2.087A1.500 1.500 0 0 1 24 3.939V20.060L18 23.500z" fill="#2ba6ee" /></svg>
        <div className="ml-[20px]"><Office letter="W" top="#41a5ee" mid="#2b7cd3" low="#185abd" tile="#123f95" /></div>
        <svg width="21" height="22" viewBox="0 0 21 22" className="ml-[21px] block"><circle cx="10.500" cy="11" r="10.500" fill="#ff6c37" /><path d="M5.500 16.500l2-3.500 6-6 2 1.500-5.500 6z" fill="#fff" /><circle cx="14.800" cy="6.500" r="1.800" fill="#fff" /></svg>
        <svg width="24" height="24" viewBox="0 0 24 24" fill="none" className="ml-[22px] block"><rect width="24" height="24" rx="2.500" fill="#f57c20" /><path d="M6 12Q3.500 10.500 3.500 8.500 3.500 5 7 5q3 0 3 3v1h4V8q0-3 3-3 3.500 0 3.500 3.500 0 2-2.500 3.500 2.500 1.500 2.500 3.500Q20.500 19 17 19q-3 0-3-3v-1h-4v1q0 3-3 3-3.500 0-3.500-3.500Q3.500 13.500 6 12z" stroke="#fff" strokeWidth="2.600" strokeLinejoin="round" /></svg>
        <div className="ml-[12px] flex h-[40px] w-[40px] flex-col items-center rounded-[4px] border border-[#2a322b] bg-[#1d261d]">
          <div className="mt-[8px]"><CocMark s={22} leaf="#56b648" ring="#9ad08a" /></div><div className="mt-[5px] h-[3px] w-[16px] rounded-full bg-[#9fb0bb]" />
        </div>
        <div className="ml-[12px] flex flex-col items-center pt-[14px]"><Office letter="X" top="#21a366" mid="#33c481" low="#107c41" tile="#185c37" /><div className="h-[3px] w-[6px] rounded-full bg-[#8e938f]" /></div>
        <div className="ml-[20px] flex flex-col items-center pt-[9px]">
          <svg width="24" height="19" viewBox="0 0 24 19" className="block"><rect x=".5" y=".5" width="23" height="17.500" fill="#e6edf3" stroke="#b5bcc2" /><path d="M2 16v-4l3-1 2-6 2 8 3 1 2-9 3 7 2-3 3 5v2z" fill="#8fcdf5" stroke="#3b9fe0" strokeWidth=".8" /></svg>
          <div className="mt-[6px] h-[3px] w-[6px] rounded-full bg-[#8e938f]" />
        </div>
      </div>
      <div className="mr-[17px] ml-auto flex items-center">
        <Line w={12} h={7} vb="0 0 12 7" sw={1.3}><path d="M1 6l5-5 5 5" /></Line>
        <Line w={18} h={18} vb="0 0 18 18" sw={1.4} className="ml-[10px]"><path d="M1 7q1-5.500 7-5.500 4.500 0 6.500 3M15 1v4h-4M1.500 16.500v-4h4M2 13q2 3 5 3.500" /><circle cx="12" cy="12.500" r="4" fill="#ff9a0c" stroke="none" /></Line>
        <svg width="16" height="16" viewBox="0 0 16 16" className="ml-[6px] block"><rect width="16" height="16" fill="#f3dedd" /><rect x=".5" y=".5" width="15" height="15" fill="none" stroke="#d98a88" /><text x="8" y="13.500" fontSize="15" fontWeight="bold" textAnchor="middle" fill="#b3242a" fontFamily="Liberation Sans">V</text></svg>
        <Fit w={23} className="mt-px ml-[14px] text-[11.500px] leading-[16px]">ENG</Fit>
        <Line w={17} h={13} vb="0 0 17 13" sw={1.4} className="ml-[18px]"><path d="M1 5q7.500-7.500 15 0M3.500 7.500q5-5 10 0M6 10q2.500-2.500 5 0" /><circle cx="8.500" cy="11.500" r=".8" fill="#fff" /></Line>
        <Line w={17} h={14} vb="0 0 17 14" sw={1.2} className="ml-[7px]"><path d="M1 5v4h2.500L7 12.500v-11L3.500 5zM9.500 5q1.500 2 0 4" /><path d="M11.500 3q3 4 0 8" stroke="#aaa" /><path d="M14 1.500q3.500 5.500 0 11" stroke="#666" /></Line>
        <Line w={17} h={14} vb="0 0 17 14" sw={1.3} className="ml-[7px]"><path d="M6 3.500h8.500v7H4.500V8M16.500 6v2" /><path d="M6.500 5.500h6v3h-6z" fill="#fff" /><path d="M2 1v2M5 1v2M1 3.500h5v2H3.500v3z" /></Line>
        <div className="ml-[14px] flex flex-col items-end text-[11.500px] leading-[16px]"><Fit w={45}>12:05 SA</Fit><Fit w={58}>14/10/2022</Fit></div>
      </div>
    </div>
  );
}

export default function App() {
  return (
    <div className="flex h-[1080px] w-[1920px] flex-col overflow-hidden bg-black">
      <TabStrip />
      <Toolbar />
      <div className="flex h-[930px] shrink-0"><Sidebar /><Game /></div>
      <Taskbar />
    </div>
  );
}
